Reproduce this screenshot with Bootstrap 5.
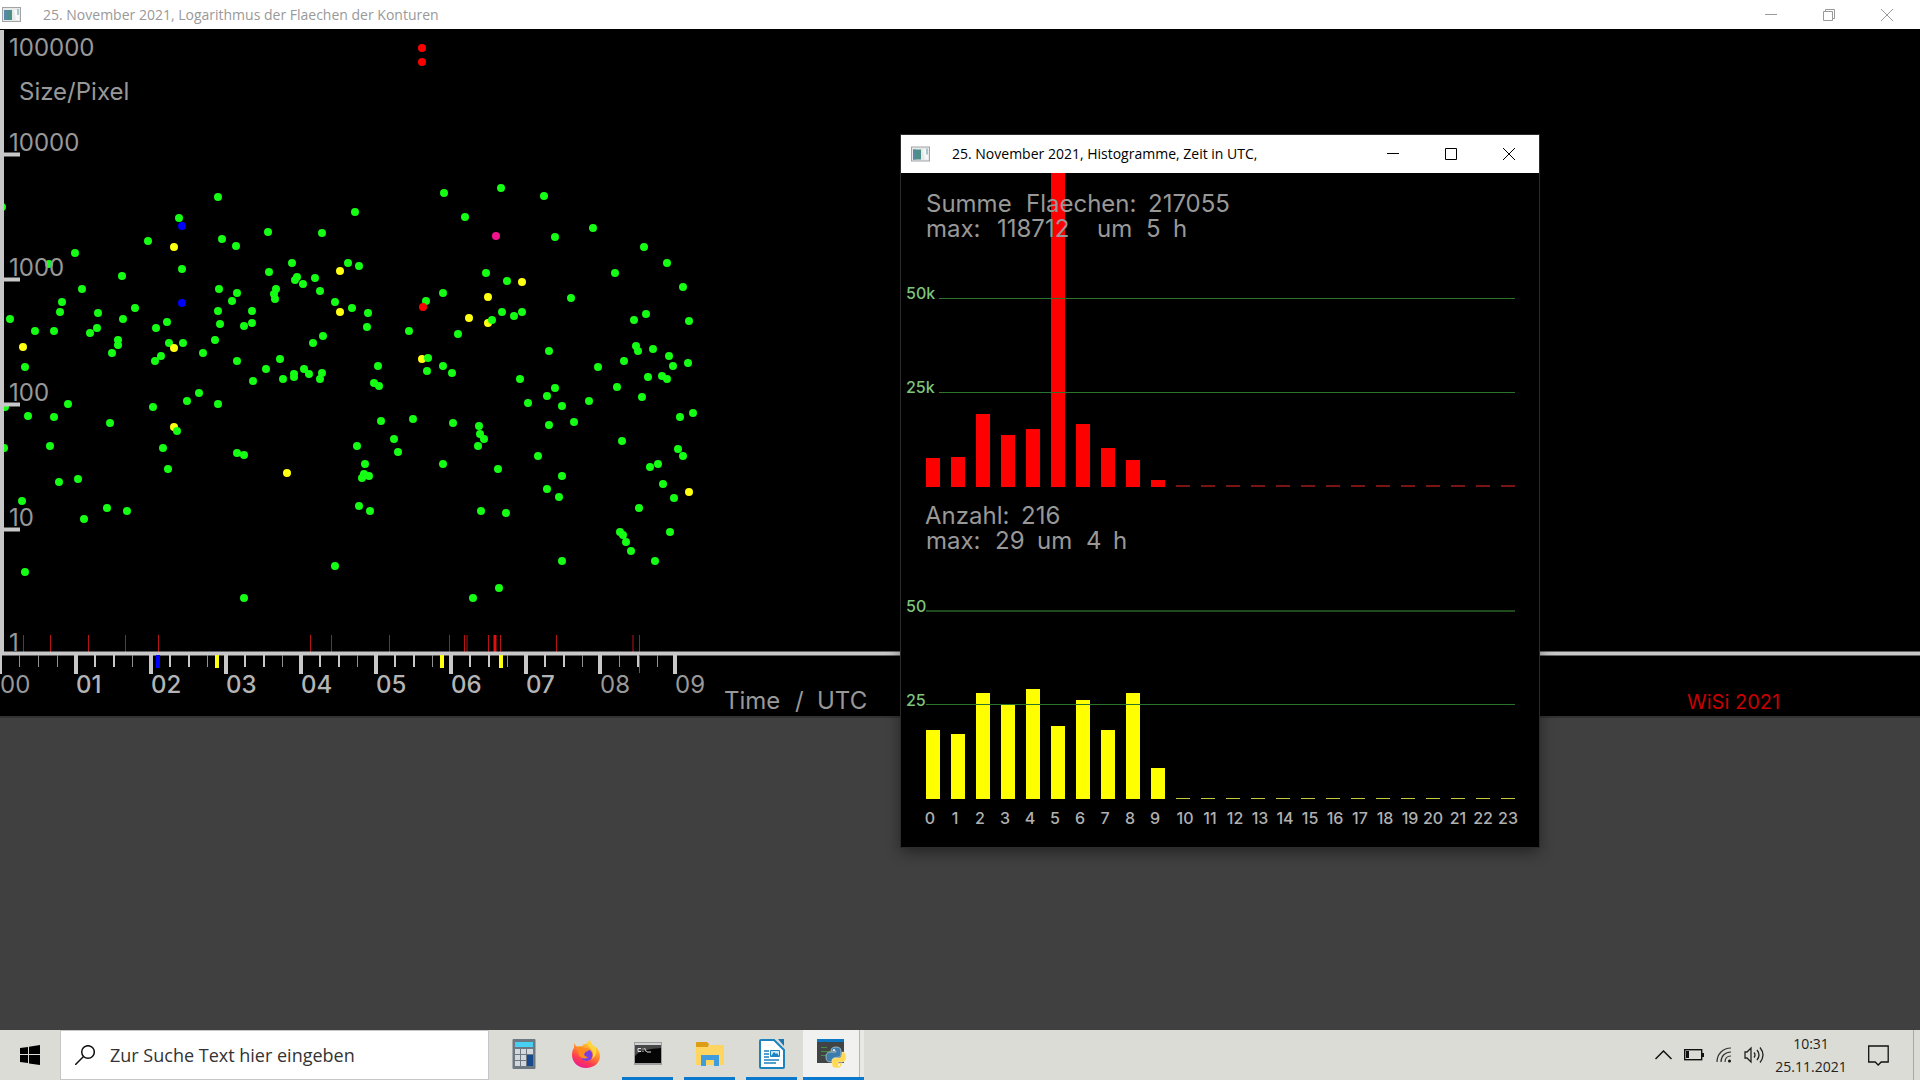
<!DOCTYPE html>
<html lang="de">
<head>
<meta charset="utf-8">
<meta name="viewport" content="width=device-width, initial-scale=1">
<title>25. November 2021, Logarithmus der Flaechen der Konturen</title>
<link rel="stylesheet" href="https://cdn.jsdelivr.net/npm/bootstrap@5.3.0/dist/css/bootstrap.min.css">
<style>
  body { background: #404040; font-family: "Open Sans", "Noto Sans", sans-serif; overflow: hidden; }
  .desk { min-height: 100vh; }
  .titlebar { background: #fff; font-size: 14px; line-height: 20px; }
  .titlebar-main { height: 29px; color: #999; padding: 0 4px 0 2px; }
  .titlebar-hist { height: 38px; color: #000; padding: 0 1px 0 10px; }
  .title-text { margin-left: 22px; white-space: nowrap; }
  .win-btn { width: 58px; height: 100%; border: 0; background: none; padding: 0; color: inherit; display: flex; align-items: center; justify-content: center; }
  .plot { background: #000; border-bottom: 2px solid #333; }
  .chart { display: block; width: 100%; height: auto; }
  .hist { left: 901px; top: 135px; width: 638px; background: #000; box-shadow: 0 0 0 1px #2c2c2c, 0 5px 14px rgba(0, 0, 0, .45); }
  svg text { font-family: Inter, Roboto, sans-serif; font-size: 24px; font-weight: 400; fill: #989898; }
  svg .hour { font-weight: 500; fill: #b4b4b4; }
  svg .level { font-size: 16px; font-weight: 500; fill: #7cc47c; }
  svg .bin { font-size: 16px; font-weight: 500; fill: #b0b0b0; text-anchor: middle; }
  svg .sign { font-size: 20px; fill: #c80000; }
  .dots { fill: none; stroke-width: 8; stroke-linecap: round; }
  .taskbar { height: 50px; background: #dcdcd6; color: #222; }
  .taskbar button { border: 0; background: none; padding: 0; color: #000; }
  .taskbar svg { display: block; margin: 0 auto; }
  .start-btn { width: 60px; }
  .search-box { width: 429px; background: #fff; border: 1px solid #c6c6c6; padding: 0 14px; gap: 15px; }
  .search-box input { border: 0; outline: 0; width: 100%; font-size: 18px; line-height: 24px; color: #333; padding: 0; }
  .search-box input::placeholder { color: #333; opacity: 1; }
  .apps { margin-left: 9px; gap: 11px; }
  .taskbar .app-btn { width: 51px; border-bottom: 3px solid transparent; }
  .taskbar .running { border-bottom-color: #0a78cc; }
  .taskbar .active-app { width: 61px; margin-left: -5px; padding-right: 4px; border-bottom: 3px solid #0a78cc; background: linear-gradient(90deg, #f1f1ef 56px, #b4b4b0 56px, #b4b4b0 57px, #e8e8e4 57px); }
  .tray { gap: 12px; padding-right: 6px; }
  .clock { width: 72px; font-size: 14px; line-height: 23px; text-align: center; margin: 0 1px 0 -2px; }
  .show-desk { border-left: 1px solid #a8a8a4; margin-left: 12px; }
</style>
</head>
<body>
<div class="desk d-flex flex-column position-relative">

  <section class="d-flex flex-column" aria-label="Logarithmus der Flaechen">
    <header class="titlebar titlebar-main d-flex align-items-center">
      <svg width="19" height="15" viewBox="0 0 19 15" aria-hidden="true"><rect x=".5" y=".5" width="18" height="14" fill="#e8eaea" stroke="#a0a4a6"/><rect x="2" y="3" width="8" height="10" fill="#4b8f88"/><path d="M2 3h3v10H2z" fill="#5a86a8"/><path d="M12 3h5v10h-3z" fill="#f8f8f8"/><path d="M15 2h2v6h-2z" fill="#a8c4cc"/></svg>
      <span class="title-text">25. November 2021, Logarithmus der Flaechen der Konturen</span>
      <div class="ms-auto d-flex h-100">
        <button class="win-btn" aria-label="Minimieren"><svg width="12" height="12" fill="none" stroke="currentColor"><path d="M0 5.500h12"/></svg></button>
        <button class="win-btn" aria-label="Verkleinern"><svg width="12" height="12" fill="none" stroke="currentColor"><path d="M.5 2.500h9v9h-9zM2.500 2.500v-2h9v9h-2"/></svg></button>
        <button class="win-btn" aria-label="Schließen"><svg width="12" height="12" fill="none" stroke="currentColor"><path d="M0 0l12 12M12 0L0 12"/></svg></button>
      </div>
    </header>

    <div class="plot">
      <svg class="chart" viewBox="0 29 1920 687" role="img" aria-label="Size/Pixel gegen Time / UTC">
        <g class="dots">
          <path stroke="#14ff14" d="M218 197h0M179 218h0M148 241h0M75 253h0M49 264h0M122 276h0M182 269h0M222 239h0M236 246h0M268 232h0M322 233h0M355 212h0M444 193h0M465 217h0M292 263h0M269 272h0M297 277h0M295 280h0M303 284h0M315 278h0M348 263h0M359 266h0M320 291h0M82 289h0M62 302h0M60 312h0M98 313h0M135 308h0M219 289h0M237 293h0M232 301h0M276 289h0M274 294h0M275 299h0M218 311h0M252 311h0M220 324h0M244 326h0M252 323h0M335 302h0M352 308h0M368 313h0M367 327h0M426 301h0M443 293h0M409 331h0M458 334h0M10 319h0M35 331h0M54 331h0M90 333h0M97 328h0M123 319h0M156 328h0M167 322h0M118 340h0M118 345h0M112 353h0M169 343h0M183 343h0M161 356h0M155 361h0M203 353h0M215 340h0M237 361h0M280 359h0M313 343h0M323 336h0M378 366h0M443 366h0M25 367h0M2 207h0
            M253 381h0M266 369h0M283 379h0M294 374h0M294 377h0M304 369h0M309 374h0M322 373h0M320 379h0M374 383h0M379 386h0M427 371h0M452 373h0M199 393h0M187 401h0M218 404h0M153 407h0M68 404h0M28 416h0M54 417h0M110 423h0M5 407h0M50 446h0M163 448h0M168 469h0M4 448h0M59 482h0M78 479h0M22 501h0M107 508h0M127 511h0M84 519h0M25 572h0M237 453h0M244 455h0M381 421h0M413 419h0M453 423h0M394 439h0M398 452h0M357 446h0M365 464h0M364 474h0M362 478h0M369 476h0M443 464h0M359 506h0M370 511h0M335 566h0M244 598h0M473 598h0
            M501 188h0M544 196h0M593 228h0M555 237h0M644 247h0M667 263h0M615 273h0M683 287h0M486 273h0M507 281h0M571 298h0M502 312h0M514 316h0M522 312h0M634 320h0M646 314h0M689 321h0M549 351h0M636 346h0M638 351h0M653 349h0M669 356h0M673 366h0M688 363h0M624 361h0M598 367h0M648 377h0M662 376h0M667 379h0M617 387h0M642 397h0M589 401h0M520 379h0M555 388h0M547 396h0M528 403h0M562 406h0M549 425h0M574 422h0M680 417h0M693 413h0M622 441h0M479 426h0M480 434h0M484 439h0M478 446h0M678 449h0
            M683 456h0M650 467h0M658 464h0M663 484h0M674 498h0M639 508h0M670 532h0M620 532h0M623 535h0M626 542h0M631 551h0M655 561h0M538 456h0M562 476h0M547 489h0M559 497h0M498 469h0M481 511h0M506 513h0M562 561h0M499 588h0"/>
          <path stroke="#ffff10" d="M174 247h0M340 271h0M340 312h0M469 318h0M23 347h0M174 348h0M422 359h0M174 427h0M287 473h0M522 282h0M488 297h0M488 323h0M689 492h0"/>
          <path stroke="#14ff14" d="M428 358h0M177 431h0M492 320h0"/>
          <path stroke="#f00" d="M422 48h0M422 62h0M423 307h0"/>
          <path stroke="#00f" d="M182 226h0M182 303h0"/>
          <path stroke="#f0148c" d="M496 236h0"/>
        </g>

        <text x="9" y="56">100000</text>
        <text x="19" y="100">Size/Pixel</text>
        <text x="9" y="151">10000</text>
        <text x="9" y="276">1000</text>
        <text x="9" y="401">100</text>
        <text x="9" y="526">10</text>
        <text x="9" y="651">1</text>

        <g stroke="#b41414" fill="none">
          <path d="M23.500 635v17M50.500 635v17M88.500 635v17M125.500 635v17M158.500 635v17M310.500 635v17M331.500 635v17M389.500 635v17M449.500 635v17M464.500 635v17M467 635v17M488.500 635v17M500.500 635v17M556.500 635v17M633 635v17M639.500 635v17"/>
          <path stroke="#e01010" stroke-width="3" d="M495 635v17"/>
        </g>
        <g stroke="#c8c8c8" fill="none">
          <path stroke-width="4" d="M2 30v625M4 154.500h16M4 279.500h16M4 404.500h16M4 529.500h16M0 653.500h1920"/>
          <path stroke-width="4" d="M0 655v19M76 655v19M151 655v19M226 655v19M301 655v19M376 655v19M451 655v19M526 655v19M600 655v19M675 655v19"/>
          <path stroke-width="2" d="M95 655v12M114 655v12M170 655v12M189 655v12M245 655v12M264 655v12M320 655v12M339 655v12M395 655v12M414 655v12M470 655v12M489 655v12M545 655v12M564 655v12M638 655v12"/>
          <path stroke="#909090" stroke-width="1" d="M19.500 655v12M38.500 655v12M57.500 655v12M132.500 655v12M207.500 655v12M282.500 655v12M357.500 655v12M432.500 655v12M507.500 655v12M582.500 655v12M619.500 655v12M657.500 655v12"/>
        </g>
        <path d="M639.500 655v18" stroke="#d03030"/>
        <g stroke-width="4">
          <path stroke="#00f" d="M158 655v13"/>
          <path stroke="#ffff10" d="M217 655v13M442 655v13M501 655v13"/>
        </g>

        <text x="0" y="693">00</text>
        <text class="hour" x="76" y="693">01</text>
        <text class="hour" x="151" y="693">02</text>
        <text class="hour" x="226" y="693">03</text>
        <text class="hour" x="301" y="693">04</text>
        <text class="hour" x="376" y="693">05</text>
        <text class="hour" x="451" y="693">06</text>
        <text class="hour" x="526" y="693">07</text>
        <text x="600" y="693">08</text>
        <text x="675" y="693">09</text>
        <text y="709"><tspan x="724">Time</tspan> <tspan x="795">/</tspan> <tspan x="817">UTC</tspan></text>
        <text class="sign" y="709"><tspan x="1687">WiSi</tspan> <tspan x="1735">2021</tspan></text>
      </svg>
    </div>
  </section>

  <section class="hist position-absolute" aria-label="Histogramme">
    <header class="titlebar titlebar-hist d-flex align-items-center">
      <svg width="19" height="16" viewBox="0 0 19 15" aria-hidden="true"><rect x=".5" y=".5" width="18" height="14" fill="#e8eaea" stroke="#a0a4a6"/><rect x="2" y="3" width="8" height="10" fill="#4b8f88"/><path d="M2 3h3v10H2z" fill="#5a86a8"/><path d="M12 3h5v10h-3z" fill="#f8f8f8"/><path d="M15 2h2v6h-2z" fill="#a8c4cc"/></svg>
      <span class="title-text">25. November 2021, Histogramme, Zeit in UTC,</span>
      <div class="ms-auto d-flex h-100">
        <button class="win-btn" aria-label="Minimieren"><svg width="12" height="12" fill="none" stroke="currentColor"><path d="M0 5.500h12"/></svg></button>
        <button class="win-btn" aria-label="Maximieren"><svg width="12" height="12" fill="none" stroke="currentColor"><path d="M.5 .5h11v11H.5z"/></svg></button>
        <button class="win-btn" aria-label="Schließen"><svg width="12" height="12" fill="none" stroke="currentColor"><path d="M0 0l12 12M12 0L0 12"/></svg></button>
      </div>
    </header>
    <svg class="chart" viewBox="901 173 638 674" role="img" aria-label="Summe Flaechen und Anzahl je Stunde">
      <path fill="#f00" d="M926 487v-29h14v29zM951 487v-30h14v30zM976 487v-73h14v73zM1001 487v-52h14v52zM1026 487v-58h14v58zM1051 487V173h14v314zM1076 487v-63h14v63zM1101 487v-39h14v39zM1126 487v-27h14v27zM1151 487v-7h14v7z"/>
      <path stroke="#781414" stroke-width="2" stroke-dasharray="14 11" d="M1176 486h339"/>
      <path stroke="#2c742c" d="M939 298.500h576M939 392.500h576"/>
      <text y="212"><tspan x="926">Summe</tspan> <tspan x="1026">Flaechen:</tspan> <tspan x="1148">217055</tspan></text>
      <text y="237"><tspan x="926">max:</tspan> <tspan x="997">118712</tspan> <tspan x="1097">um</tspan> <tspan x="1146">5</tspan> <tspan x="1173">h</tspan></text>
      <text class="level" x="906" y="299">50k</text>
      <text class="level" x="906" y="393">25k</text>

      <path fill="#ff0" d="M926 799v-69h14v69zM951 799v-65h14v65zM976 799v-106h14v106zM1001 799v-94h14v94zM1026 799v-110h14v110zM1051 799v-73h14v73zM1076 799v-99h14v99zM1101 799v-69h14v69zM1126 799v-106h14v106zM1151 799v-31h14v31z"/>
      <path stroke="#c8c83c" stroke-dasharray="14 11" d="M1176 798.500h339"/>
      <path stroke="#1e4a1e" stroke-width="2" d="M926 611h589"/>
      <path stroke="#2c742c" d="M926 704.500h589"/>
      <text y="524"><tspan x="925">Anzahl:</tspan> <tspan x="1021">216</tspan></text>
      <text y="549"><tspan x="926">max:</tspan> <tspan x="995">29</tspan> <tspan x="1037">um</tspan> <tspan x="1086">4</tspan> <tspan x="1113">h</tspan></text>
      <text class="level" x="906" y="612">50</text>
      <text class="level" x="906" y="706">25</text>
      <g>
        <text class="bin" x="930" y="824">0</text><text class="bin" x="955" y="824">1</text><text class="bin" x="980" y="824">2</text><text class="bin" x="1005" y="824">3</text><text class="bin" x="1030" y="824">4</text><text class="bin" x="1055" y="824">5</text><text class="bin" x="1080" y="824">6</text><text class="bin" x="1105" y="824">7</text><text class="bin" x="1130" y="824">8</text><text class="bin" x="1155" y="824">9</text>
        <text class="bin" x="1185" y="824">10</text><text class="bin" x="1210" y="824">11</text><text class="bin" x="1235" y="824">12</text><text class="bin" x="1260" y="824">13</text><text class="bin" x="1285" y="824">14</text><text class="bin" x="1310" y="824">15</text><text class="bin" x="1335" y="824">16</text><text class="bin" x="1360" y="824">17</text><text class="bin" x="1385" y="824">18</text><text class="bin" x="1410" y="824">19</text>
        <text class="bin" x="1433" y="824">20</text><text class="bin" x="1458" y="824">21</text><text class="bin" x="1483" y="824">22</text><text class="bin" x="1508" y="824">23</text>
      </g>
    </svg>
  </section>

  <footer class="taskbar d-flex mt-auto">
    <button class="start-btn d-flex align-items-center justify-content-center" aria-label="Start"><svg width="20" height="20"><path d="M0 3l8-1v7H0zM9 1.800L20 0v9H9zM0 10h8v8l-8-1zM9 10h11v10l-11-1.500z"/></svg></button>
    <label class="search-box d-flex align-items-center">
      <svg class="flex-shrink-0 m-0" width="20" height="20" fill="none" stroke="#111" stroke-width="1.500"><circle cx="13" cy="7" r="6.300"/><path d="M8.500 11.500L0 20"/></svg>
      <input type="text" placeholder="Zur Suche Text hier eingeben" aria-label="Suche">
    </label>
    <nav class="apps d-flex" aria-label="Programme">
      <button class="app-btn" aria-label="Rechner"><svg width="24" height="30"><rect x=".5" width="23" height="30" rx="1" fill="#6c7882"/><path fill="#48d0f4" d="M3 3h18v5H3z"/><path fill="#d4d8dc" d="M3 10h5v5H3zM9 10h5v5H9zM15 10h6v5h-6zM3 16h5v5H3zM9 16h5v5H9zM3 22h5v5H3zM9 22h5v5H9z"/><path fill="#164a8c" d="M15 16h6v11h-6z"/></svg></button>
      <button class="app-btn" aria-label="Firefox"><svg width="28" height="28" viewBox="0 0 28 28"><defs><linearGradient id="fox" x1=".8" y1="0" x2=".3" y2="1"><stop offset="0" stop-color="#fff04a"/><stop offset=".4" stop-color="#ff9a28"/><stop offset=".75" stop-color="#ff3a50"/><stop offset="1" stop-color="#e8189a"/></linearGradient></defs><path fill="url(#fox)" d="M3 3c0 2 .5 3 2 3.500C8 6 9 6 10 6.500 11 4 13 3.500 14 4c2-1 2-3 4-4 0 4 3 5 5 8l1-1c3 3 4 6 4 9 0 7-6 12-14 12S0 22 0 15c0-4 1-6 2-7 0-2 0-4 1-5z"/><circle cx="14.500" cy="15" r="6" fill="#7a3fe0"/><path fill="#ff8a20" d="M5 8c3-2 5-1 7 0 2 0 5 0 5 2-1 2-4 1-4 3-2 1 0 4 3 4-3 3-8 1-9-2-1-3-1-5-2-7z"/><path fill="#ffd53c" d="M18 0c-3 3-2 6 1 9 2 2 3 6 1 10 5-3 5-9 3-12-2-2-4-3-5-7z"/></svg></button>
      <button class="app-btn running" aria-label="Eingabeaufforderung"><svg width="28" height="24"><rect width="28" height="23" fill="#9c9ea0"/><path fill="#d0d2d4" d="M1 1h26v2H1z"/><path fill="#050505" d="M1 3h26v18H1z"/><path fill="#484848" d="M1 3h26v3C16 7 6 8 1 14z"/><path d="M7 6.500H4v3h3M9 6.500v1M9 9v1M10.500 6l2 4M13 10h4" stroke="#e0e0e0" fill="none"/></svg></button>
      <button class="app-btn running" aria-label="Explorer"><svg width="28" height="24"><path fill="#dc9c14" d="M0 1q0-1 1-1h10l2 2-1 3H0z"/><path fill="#ffd562" d="M0 5h12l2-2h14v20H0z"/><path fill="#419cdc" d="M5 13h18v11h-5v-6h-8v6H5z"/></svg></button>
      <button class="app-btn running" aria-label="Writer"><svg width="26" height="30"><path fill="#fff" stroke="#1c82c0" stroke-width="2" d="M2 1h13l10 10v17q0 1-1 1H2q-1 0-1-1V2q0-1 1-1z"/><path fill="#1c74b0" d="M19 0h6v7z"/><path stroke="#1c82c0" stroke-width="1.500" d="M5 12h5M5 15h5M5 18h5M5 21h15M5 24h12"/><path fill="#cfe6f4" stroke="#1c82c0" d="M11.500 11.500h9v6h-9z"/><path fill="#1c82c0" d="M12 17l3-4 2 2 1-1 2 3z"/></svg></button>
      <button class="app-btn active-app" aria-label="Python"><svg width="30" height="29"><path fill="#404444" d="M0 0h27v24H0z"/><path fill="#0c78c4" d="M0 0h27v3H0z"/><path stroke="#4a8a4a" d="M4 8.500h6M4 12.500h10M4 16.500h5"/><path fill="#3c7cac" stroke="#dce4e8" stroke-width=".6" d="M14 12c0-3 2-4 5-4s5 1 5 4v4c0 3-6 2-7 3s-1 4-3 4c-4 0-5-2-5-5s1-5 5-5h5v-1z"/><path fill="#ffd950" stroke="#f4f0d0" stroke-width=".6" d="M25 13c3 0 4 2 4 5s-1 5-4 5h-4v1h4c0 3-2 5-5 5s-5-1-5-4v-3c0-3 2-3 5-3s5 0 5-6z"/><circle cx="17" cy="11" r="1" fill="#fff"/><circle cx="22" cy="26" r="1" fill="#fff"/></svg></button>
    </nav>
    <div class="tray ms-auto d-flex align-items-center">
      <button aria-label="Ausgeblendete Symbole"><svg width="17" height="10" fill="none" stroke="#111" stroke-width="1.500"><path d="M.5 9l8-8 8 8"/></svg></button>
      <button aria-label="Akku"><svg width="20" height="12" fill="none" stroke="#111"><rect x=".7" y=".7" width="17" height="10" stroke-width="1.400"/><path fill="#111" stroke="none" d="M2 2h3v7H2zM18 4h2v4h-2z"/></svg></button>
      <button aria-label="WLAN"><svg width="16" height="16" fill="none" stroke="#333" stroke-width="1.200"><path d="M1 15C1 7 7 1 15 1M5 15C5 9 9 5 15 5M9 15c0-4 2-6 6-6"/><circle cx="13.500" cy="14" r="1.500" fill="#111" stroke="none"/></svg></button>
      <button aria-label="Lautstärke"><svg width="21" height="18" fill="none" stroke="#222" stroke-width="1.300"><path d="M1 6h2l4-4v14l-4-4H1zM10 6.500q2 2.500 0 5M13 4q4 5 0 10M16 1.500q6 7.500 0 15"/></svg></button>
      <div class="clock"><div>10:31</div><div>25.11.2021</div></div>
      <button class="ms-2" aria-label="Benachrichtigungen"><svg width="21" height="21" fill="none" stroke="#111" stroke-width="1.300"><path d="M.7 1h19.500v16h-7l-3 3-3-3H.7z"/></svg></button>
      <div class="show-desk align-self-stretch"></div>
    </div>
  </footer>
</div>
<script src="https://cdn.jsdelivr.net/npm/bootstrap@5.3.0/dist/js/bootstrap.bundle.min.js"></script>
</body>
</html>
